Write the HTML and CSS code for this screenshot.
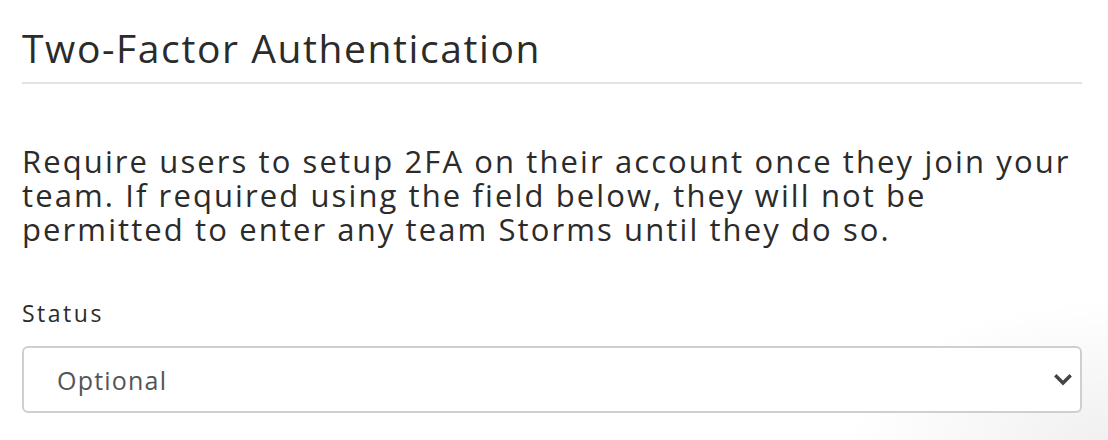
FILE: index.html
```html
<!DOCTYPE html>
<html lang="en">
<head>
<meta charset="utf-8">
<title>Two-Factor Authentication</title>
<link rel="stylesheet" href="styles.css">
</head>
<body>
<main class="panel">
  <h2 class="panel-title">Two-Factor Authentication</h2>
  <p class="panel-text">Require users to setup 2FA on their account once they join your team. If required using the field below, they will not be permitted to enter any team Storms until they do so.</p>
  <div class="field">
    <label class="field-label" for="status">Status</label>
    <div class="select">
      <span class="select-value" id="status">Optional</span>
      <svg class="select-chevron" width="18" height="12" viewBox="0 0 18 12" aria-hidden="true">
        <path d="M2.5 2.5 L9 9 L15.5 2.5" fill="none" stroke="#444" stroke-width="3.4" stroke-linecap="square"/>
      </svg>
    </div>
  </div>
</main>
</body>
</html>
```

FILE: styles.css
```css
html, body {
  margin: 0;
  padding: 0;
}
body {
  width: 1108px;
  height: 440px;
  overflow: hidden;
  background: radial-gradient(ellipse 260px 140px at 1108px 440px, rgba(0,0,0,0.06), rgba(0,0,0,0) 100%), #fff;
  font-family: "Open Sans", "Liberation Sans", sans-serif;
  color: #333;
}
.panel {
  padding: 22px 26px 0 22px;
}
.panel-title {
  margin: 0;
  font-weight: 400;
  font-size: 39px;
  line-height: 52px;
  letter-spacing: 1.6px;
  color: #2b2b2b;
  padding-bottom: 8px;
  border-bottom: 2px solid #e3e3e3;
}
.panel-text {
  margin: 60px 0 0 0;
  font-size: 31px;
  line-height: 34px;
  letter-spacing: 2.1px;
  color: #2b2b2b;
}
.field {
  margin-top: 52px;
}
.field-label {
  display: block;
  font-size: 23px;
  line-height: 30px;
  color: #2b2b2b;
  letter-spacing: 2.5px;
}
.select {
  margin-top: 18px;
  height: 63px;
  border: 2px solid #cfcfcf;
  border-radius: 6px;
  display: flex;
  align-items: center;
  justify-content: space-between;
  padding: 0 8px 0 33px;
  background: #fff;
}
.select-value {
  font-size: 25px;
  letter-spacing: 1.2px;
  color: #555;
}
.select-chevron {
  display: block;
}
```
